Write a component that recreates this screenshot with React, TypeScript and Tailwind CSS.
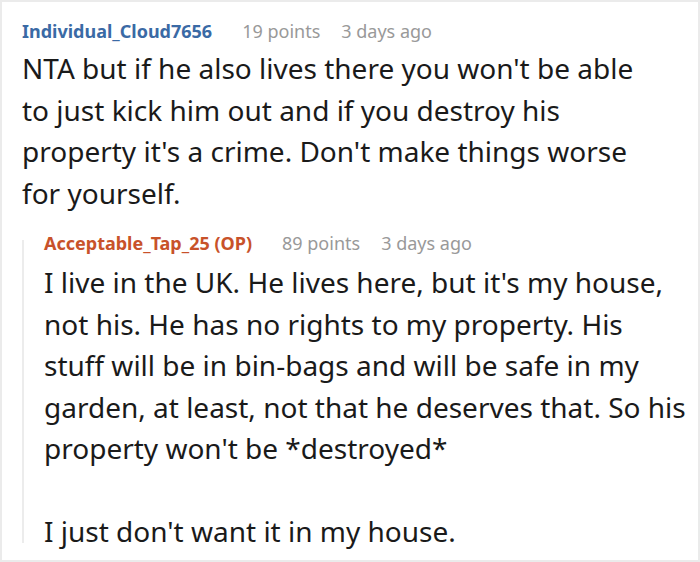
import React from "react";

function Meta({ name, color, points, time }: { name: string; color: string; points: string; time: string }) {
  return (
    <div className="flex items-baseline whitespace-nowrap text-[18px] leading-[24px]">
      <span className={`font-bold ${color}`}>{name}</span>
      <span className="ml-[30px] text-[#999999]">{points}</span>
      <span className="ml-[21px] text-[#999999]">{time}</span>
    </div>
  );
}

function Lines({ lines }: { lines: string[] }) {
  return (
    <div className="text-[28px] leading-[41.5px] whitespace-nowrap">
      {lines.map((l, i) => (
        <div key={i} className="h-[41.5px]">
          {l}
        </div>
      ))}
    </div>
  );
}

export default function App() {
  return (
    <div
      className="w-[700px] h-[562px] bg-white border-2 border-[#ebebeb] overflow-hidden text-[#1a1a1a]"
      style={{ fontFamily: '"Noto Sans", "Open Sans", sans-serif' }}
    >
      <div className="pl-[20px] pt-[17px]">
        <Meta name="Individual_Cloud7656" color="text-[#3a6aa5]" points="19 points" time="3 days ago" />
        <div className="mt-[5px]">
          <Lines
            lines={[
              "NTA but if he also lives there you won't be able",
              "to just kick him out and if you destroy his",
              "property it's a crime. Don't make things worse",
              "for yourself.",
            ]}
          />
        </div>
        <div className="mt-[26px] flex flex-col border-l-2 border-[#ececec] pl-[20px]">
          <div className="-mt-[9px]">
            <Meta name="Acceptable_Tap_25 (OP)" color="text-[#c8522a]" points="89 points" time="3 days ago" />
          </div>
          <div className="mt-[7px] -mb-[10px]">
            <Lines
              lines={[
                "I live in the UK. He lives here, but it's my house,",
                "not his. He has no rights to my property. His",
                "stuff will be in bin-bags and will be safe in my",
                "garden, at least, not that he deserves that. So his",
                "property won't be *destroyed*",
                "\u00a0",
                "I just don't want it in my house.",
              ]}
            />
          </div>
        </div>
      </div>
    </div>
  );
}
